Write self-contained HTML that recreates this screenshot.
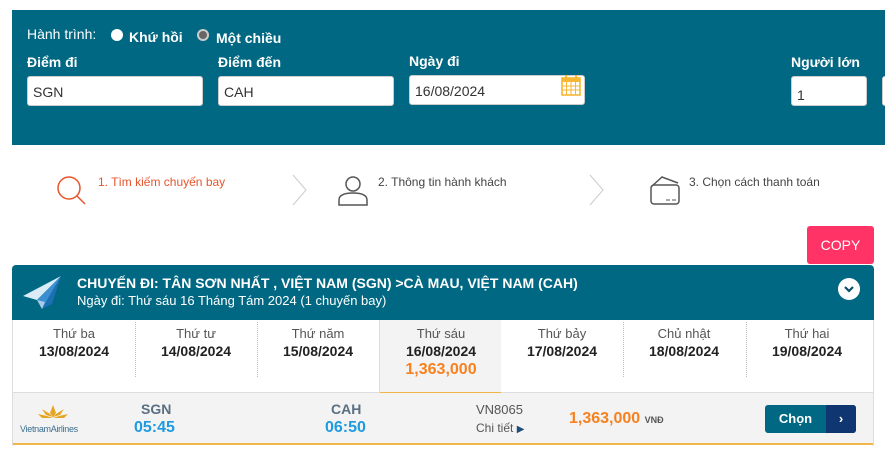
<!DOCTYPE html>
<html><head><meta charset="utf-8"><style>
*{box-sizing:border-box;margin:0;padding:0}
body{width:885px;height:454px;overflow:hidden;background:#fff;font-family:"Liberation Sans",Arial,sans-serif;position:relative}
.a{position:absolute}
.panel{left:12px;top:10px;width:873px;height:135px;background:#006882}
.w{color:#fff}
.lbl{color:#fff;font-weight:bold;font-size:14px}
.inp{background:#fff;border:1px solid #ccc;border-radius:3px;height:30px;font-size:14px;color:#333;padding:7px 5px}
.rad{width:12px;height:12px;border-radius:50%;background:#fff}
.st{font-size:12px;color:#444}
.day{width:122px;text-align:center;top:320px;height:72px}
.day .d1{font-size:13px;color:#555;margin-top:6px}
.day .d2{font-size:14px;font-weight:bold;color:#222;margin-top:2px}
.sep{top:322px;height:55px;border-left:1px dotted #bbb}
</style></head><body>
<div class="a panel"></div>
<div class="a w" style="left:27px;top:26px;font-size:14px">Hành trình:</div>
<div class="a rad" style="left:111px;top:29px"></div>
<div class="a lbl" style="left:129px;top:29px">Khứ hồi</div>
<div class="a rad" style="left:197px;top:29px;background:#ddd;border:2px solid #ccc"><div style="width:8px;height:8px;border-radius:50%;background:#666"></div></div>
<div class="a lbl" style="left:216px;top:30px">Một chiều</div>
<div class="a lbl" style="left:27px;top:54px">Điểm đi</div>
<div class="a lbl" style="left:218px;top:54px">Điểm đến</div>
<div class="a lbl" style="left:409px;top:53px">Ngày đi</div>
<div class="a lbl" style="left:791px;top:54px">Người lớn</div>
<div class="a inp" style="left:27px;top:76px;width:176px">SGN</div>
<div class="a inp" style="left:218px;top:76px;width:176px">CAH</div>
<div class="a inp" style="left:409px;top:75px;width:176px">16/08/2024</div>
<svg class="a" style="left:561px;top:74px" width="20" height="22" viewBox="0 0 20 22"><rect x="1" y="4" width="18" height="17" fill="none" stroke="#f7b733" stroke-width="1.6"/><rect x="1" y="4" width="18" height="4" fill="#f7b733"/><path d="M1 12h18M1 16h18M5.5 8v13M10 8v13M14.5 8v13" stroke="#f7b733" stroke-width="1"/><path d="M5 1v5M15 1v5" stroke="#f7b733" stroke-width="2"/></svg>
<div class="a inp" style="left:791px;top:76px;width:76px;padding-top:10px">1</div>
<div class="a inp" style="left:882px;top:76px;width:20px"></div>

<svg class="a" style="left:55px;top:174px" width="32" height="32" viewBox="0 0 32 32"><circle cx="14" cy="14" r="11" fill="none" stroke="#e8542b" stroke-width="1.5"/><path d="M22 22l8 8" stroke="#e8542b" stroke-width="1.5"/></svg>
<div class="a st" style="left:98px;top:175px;color:#e8542b">1. Tìm kiếm chuyến bay</div>
<svg class="a" style="left:292px;top:174px" width="16" height="32"><path d="M1 1l13 15L1 31" fill="none" stroke="#ccc" stroke-width="1"/></svg>
<svg class="a" style="left:336px;top:174px" width="34" height="32" viewBox="0 0 34 32"><circle cx="17" cy="10" r="7" fill="none" stroke="#555" stroke-width="1.5"/><path d="M3 31v-5c0-5 6-7 14-7s14 2 14 7v5z" fill="none" stroke="#555" stroke-width="1.5"/></svg>
<div class="a st" style="left:378px;top:175px">2. Thông tin hành khách</div>
<svg class="a" style="left:589px;top:174px" width="16" height="32"><path d="M1 1l13 15L1 31" fill="none" stroke="#ccc" stroke-width="1"/></svg>
<svg class="a" style="left:649px;top:175px" width="32" height="31" viewBox="0 0 32 31"><path d="M2 12l11-10 16 6" fill="none" stroke="#555" stroke-width="1.5"/><rect x="2" y="10" width="28" height="19" rx="3" fill="none" stroke="#555" stroke-width="1.5"/><path d="M17 25h4M23 25h4" stroke="#555" stroke-width="1"/></svg>
<div class="a st" style="left:689px;top:175px">3. Chọn cách thanh toán</div>

<div class="a" style="left:807px;top:226px;width:67px;height:38px;background:#ff3366;border-radius:3px;color:#fff;font-size:14px;text-align:center;line-height:38px">COPY</div>

<div class="a" style="left:12px;top:265px;width:862px;height:55px;background:#006882;border-radius:4px 4px 0 0"></div>
<svg class="a" style="left:22px;top:274px" width="40" height="36" viewBox="0 0 40 36"><path d="M39 2L1 22l14 4z" fill="#d9ecf7"/><path d="M39 2L15 26l5 9z" fill="#3a8fd0"/><path d="M39 2L20 35l10-5z" fill="#1d6fb3"/><path d="M15 26l5 9 3-7z" fill="#a8cbe8"/></svg>
<div class="a" style="left:77px;top:275px;color:#fff;font-weight:bold;font-size:14px">CHUYẾN ĐI: TÂN SƠN NHẤT , VIỆT NAM (SGN) &gt;CÀ MAU, VIỆT NAM (CAH)</div>
<div class="a" style="left:77px;top:293px;color:#fff;font-size:13px">Ngày đi: Thứ sáu 16 Tháng Tám 2024 (1 chuyến bay)</div>
<div class="a" style="left:838px;top:278px;width:22px;height:22px;border-radius:50%;background:#fff"><svg width="22" height="22"><path d="M7 9l4 4 4-4" fill="none" stroke="#0a4e66" stroke-width="2.2"/></svg></div>

<div class="a" style="left:12px;top:320px;width:862px;height:126px;border-left:1px solid #ddd;border-right:1px solid #ddd"></div>
<div class="a" style="left:13px;top:392px;width:860px;height:53px;background:#f3f3f3;border-top:1px solid #ddd;border-bottom:2px solid #f0b64a"></div>
<div class="a" style="left:380px;top:320px;width:121px;height:73px;background:#f3f3f3;border-bottom:1px solid #f0b64a"></div>
<div class="a day" style="left:13px"><div class="d1">Thứ ba</div><div class="d2">13/08/2024</div></div>
<div class="a day" style="left:135px"><div class="d1">Thứ tư</div><div class="d2">14/08/2024</div></div>
<div class="a day" style="left:257px"><div class="d1">Thứ năm</div><div class="d2">15/08/2024</div></div>
<div class="a day" style="left:380px"><div class="d1">Thứ sáu</div><div class="d2">16/08/2024</div><div style="color:#f7811e;font-weight:bold;font-size:16px;margin-top:2px">1,363,000</div></div>
<div class="a day" style="left:501px"><div class="d1">Thứ bảy</div><div class="d2">17/08/2024</div></div>
<div class="a day" style="left:623px"><div class="d1">Chủ nhật</div><div class="d2">18/08/2024</div></div>
<div class="a day" style="left:746px"><div class="d1">Thứ hai</div><div class="d2">19/08/2024</div></div>
<div class="a sep" style="left:135px"></div><div class="a sep" style="left:257px"></div><div class="a sep" style="left:623px"></div><div class="a sep" style="left:746px"></div>
<div class="a" style="left:379px;top:320px;height:73px;border-left:1px solid #ddd"></div>

<svg class="a" style="left:38px;top:405px" width="30" height="14" viewBox="0 0 30 14"><path d="M15 0l3 8-3 4-3-4z M4 4l8 5 3 3-7-2z M26 4l-8 5-3 3 7-2z M0 9l9 2 6 2H4z M30 9l-9 2-6 2h11z" fill="#e6a521"/></svg>
<div class="a" style="left:20px;top:424px;font-size:9px;color:#3a6e8f;letter-spacing:-0.3px">VietnamAirlines</div>
<div class="a" style="left:141px;top:401px;font-size:14px;font-weight:bold;color:#5a6f82">SGN</div>
<div class="a" style="left:134px;top:419px;font-size:16px;font-weight:bold;color:#1e9be0">05:45</div>
<div class="a" style="left:331px;top:401px;font-size:14px;font-weight:bold;color:#5a6f82">CAH</div>
<div class="a" style="left:325px;top:419px;font-size:16px;font-weight:bold;color:#1e9be0">06:50</div>
<div class="a" style="left:476px;top:402px;font-size:13px;color:#555">VN8065</div>
<div class="a" style="left:476px;top:421px;font-size:12px;color:#555">Chi tiết <span style="color:#1d4e7a;font-size:10px">▶</span></div>
<div class="a" style="left:569px;top:410px;font-size:16px;font-weight:bold;color:#f7811e">1,363,000 <span style="font-size:9px;color:#555">VNĐ</span></div>
<div class="a" style="left:765px;top:405px;width:91px;height:28px;border-radius:3px;overflow:hidden;background:#006882"><div style="position:absolute;left:0;top:0;width:61px;color:#fff;font-size:13px;font-weight:bold;text-align:center;line-height:28px">Chọn</div><div style="position:absolute;left:61px;top:0;width:30px;height:28px;background:#0f3670;color:#fff;text-align:center;line-height:27px;font-size:13px;font-weight:bold">›</div></div>
</body></html>
